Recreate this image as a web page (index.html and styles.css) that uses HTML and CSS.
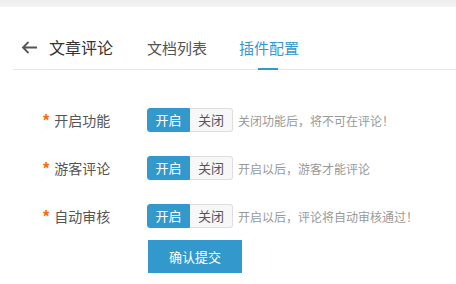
FILE: index.html
```html
<!DOCTYPE html>
<html lang="zh-CN">
<head>
    <meta charset="UTF-8">
    <title>插件配置</title>
    <link rel="stylesheet" href="styles.css">
</head>
<body>
    <div class="topbar"></div>
    <div class="header">
        <a class="back" href="#">
            <svg width="17" height="13" viewBox="0 0 17 13"><path d="M16 6.5H2M7.5 1L2 6.5 7.5 12" fill="none" stroke="#555" stroke-width="1.8"/></svg>
        </a>
        <span class="title">文章评论</span>
        <a class="tab" href="#">文档列表</a>
        <a class="tab active" href="#">插件配置</a>
    </div>

    <div class="form">
        <div class="row">
            <label class="label"><i>*</i>开启功能</label>
            <div class="switch"><span class="on">开启</span><span class="off">关闭</span></div>
            <span class="hint">关闭功能后，将不可在评论！</span>
        </div>
        <div class="row">
            <label class="label"><i>*</i>游客评论</label>
            <div class="switch"><span class="on">开启</span><span class="off">关闭</span></div>
            <span class="hint">开启以后，游客才能评论</span>
        </div>
        <div class="row">
            <label class="label"><i>*</i>自动审核</label>
            <div class="switch"><span class="on">开启</span><span class="off">关闭</span></div>
            <span class="hint">开启以后，评论将自动审核通过！</span>
        </div>
        <div class="actions">
            <button class="submit">确认提交</button>
        </div>
    </div>
</body>
</html>
```

FILE: styles.css
```css
body {
    margin: 0;
    background: #fff;
    font-family: "Noto Sans CJK SC", "Liberation Sans", sans-serif;
    color: #555;
}

.topbar {
    height: 7px;
    background: linear-gradient(#eeeeee, #f4f4f4);
}

.header {
    display: flex;
    align-items: center;
    height: 44px;
    padding-top: 18px;
    margin-left: 13px;
    border-bottom: 1px solid #e6e6e6;
}

.back {
    display: flex;
    margin-left: 8px;
    margin-right: 11px;
}

.title {
    font-size: 16px;
    color: #333;
    margin-right: 34px;
}

.tab {
    position: relative;
    align-self: stretch;
    display: flex;
    align-items: center;
    font-size: 15px;
    color: #555;
    text-decoration: none;
    margin-right: 32px;
}

.tab.active {
    color: #3398cc;
}

.tab.active::after {
    content: "";
    position: absolute;
    left: 19px;
    bottom: -1px;
    width: 20px;
    height: 2px;
    background: #3398cc;
}

.form {
    padding-top: 38px;
}

.row {
    display: flex;
    align-items: center;
    height: 24px;
    margin-bottom: 24px;
}

.label {
    width: 103px;
    padding-left: 43px;
    box-sizing: border-box;
    width: 147px;
    font-size: 14px;
    color: #555;
}

.label i {
    font-family: "Liberation Sans", sans-serif;
    font-style: normal;
    font-weight: bold;
    font-size: 16px;
    color: #f60;
    margin-right: 5px;
}

.switch {
    display: flex;
    height: 24px;
    font-size: 13px;
    line-height: 22px;
}

.switch span {
    width: 43px;
    text-align: center;
    box-sizing: border-box;
    border: 1px solid #ddd;
}

.switch .on {
    background: #3398cc;
    border-color: #3398cc;
    color: #fff;
    border-radius: 3px 0 0 3px;
}

.switch .off {
    background: #f7f7f7;
    color: #555;
    border-left: 0;
    border-radius: 0 3px 3px 0;
}

.hint {
    margin-left: 5px;
    font-size: 12px;
    color: #999;
}

.actions {
    margin-top: -12px;
    padding-left: 148px;
}

.submit {
    width: 94px;
    height: 33px;
    border: 0;
    background: #3398cc;
    color: #fff;
    font-family: inherit;
    font-size: 13px;
}
```
